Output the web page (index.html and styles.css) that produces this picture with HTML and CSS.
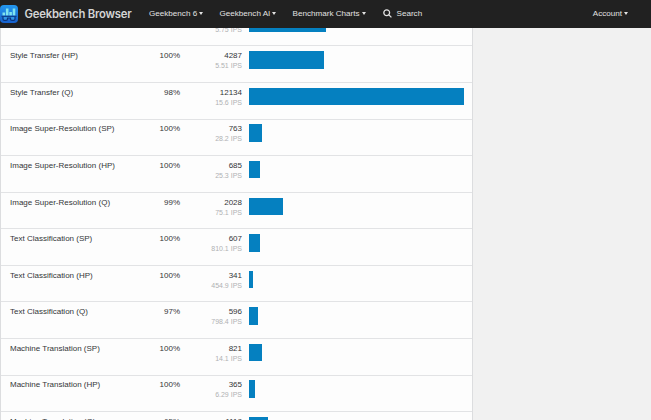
FILE: index.html
```html
<!DOCTYPE html>
<html lang="en">
<head>
<meta charset="utf-8">
<title>Geekbench Browser</title>
<link rel="stylesheet" href="styles.css">
</head>
<body>
<nav class="navbar">
  <a class="brand">
    <svg class="logo" viewBox="0 0 18 18">
      <defs><linearGradient id="g" x2="0" y2="1"><stop stop-color="#2398ee"/><stop offset="1" stop-color="#1760cc"/></linearGradient></defs>
      <rect width="18" height="18" rx="4" fill="url(#g)"/>
      <path d="M2.500 7.500h2.600v3H2.500zM5.900 3.500h2.600v7H5.900zM9.300 7h2.600v3.500H9.300zM12.700 3.500h2.600v7h-2.600z" fill="#7fe4ee"/>
      <path d="M1.500 11.300h15" stroke="#0b347e" stroke-width="1"/>
      <path d="M3 12v2q0 1.400 1.400 1.400h1.700q1.400 0 1.400-1.400v-1h3v1q0 1.400 1.400 1.400h1.700q1.400 0 1.400-1.400v-2" fill="#3296e4" stroke="#0b347e" stroke-width="1.200"/>
    </svg>
    <span class="brand-name">Geekbench Browser</span>
  </a>
  <a class="link gb">Geekbench 6<i class="caret"></i></a>
  <a class="link ai">Geekbench AI<i class="caret"></i></a>
  <a class="link charts">Benchmark Charts<i class="caret"></i></a>
  <a class="link search"><svg class="glass" viewBox="0 0 9 9"><circle cx="3.700" cy="3.700" r="2.900"/><path d="M5.900 5.900L8.400 8.400"/></svg>Search</a>
  <a class="link account">Account<i class="caret"></i></a>
</nav>
<main class="page">
  <div class="results">
    <div class="row"><div class="name"></div><div class="acc"></div><div class="score">&nbsp;<small>5.75 IPS</small></div><div class="bar" style="width:77px"></div></div>
    <div class="row"><div class="name">Style Transfer (HP)</div><div class="acc">100%</div><div class="score">4287<small>5.51 IPS</small></div><div class="bar" style="width:75px"></div></div>
    <div class="row"><div class="name">Style Transfer (Q)</div><div class="acc">98%</div><div class="score">12134<small>15.6 IPS</small></div><div class="bar" style="width:214.500px"></div></div>
    <div class="row"><div class="name">Image Super-Resolution (SP)</div><div class="acc">100%</div><div class="score">763<small>28.2 IPS</small></div><div class="bar" style="width:13px"></div></div>
    <div class="row"><div class="name">Image Super-Resolution (HP)</div><div class="acc">100%</div><div class="score">685<small>25.3 IPS</small></div><div class="bar" style="width:10.600px"></div></div>
    <div class="row"><div class="name">Image Super-Resolution (Q)</div><div class="acc">99%</div><div class="score">2028<small>75.1 IPS</small></div><div class="bar" style="width:34px"></div></div>
    <div class="row"><div class="name">Text Classification (SP)</div><div class="acc">100%</div><div class="score">607<small>810.1 IPS</small></div><div class="bar" style="width:10.600px"></div></div>
    <div class="row"><div class="name">Text Classification (HP)</div><div class="acc">100%</div><div class="score">341<small>454.9 IPS</small></div><div class="bar" style="width:4.400px"></div></div>
    <div class="row"><div class="name">Text Classification (Q)</div><div class="acc">97%</div><div class="score">596<small>798.4 IPS</small></div><div class="bar" style="width:8.600px"></div></div>
    <div class="row"><div class="name">Machine Translation (SP)</div><div class="acc">100%</div><div class="score">821<small>14.1 IPS</small></div><div class="bar" style="width:13px"></div></div>
    <div class="row"><div class="name">Machine Translation (HP)</div><div class="acc">100%</div><div class="score">365<small>6.29 IPS</small></div><div class="bar" style="width:6.400px"></div></div>
    <div class="row"><div class="name">Machine Translation (Q)</div><div class="acc">65%</div><div class="score">1118<small>19.3 IPS</small></div><div class="bar" style="width:19.300px"></div></div>
  </div>
</main>
</body>
</html>
```
FILE: styles.css
```css
* { box-sizing: border-box; }
body {
  margin: 0;
  height: 420px;
  display: flex;
  flex-direction: column;
  overflow: hidden;
  background: #f1f1f1;
  color: #343638;
  font: 8px/10px "Liberation Sans", Arial, sans-serif;
}
.navbar {
  flex: 0 0 28px;
  display: flex;
  align-items: center;
  padding: 0 23px 1px 0;
  background: #212121;
  color: #e2e2e2;
  white-space: nowrap;
}
.brand { display: flex; align-items: center; width: 149px; }
.logo { width: 18px; height: 18px; margin-right: 6.500px; }
.brand-name {
  font: 600 11.300px/16px Inter, sans-serif;
  letter-spacing: -0.200px;
  color: #d4d4d4;
}
.link { display: flex; align-items: center; font-size: 8.100px; }
.gb { width: 70.500px; }
.ai { width: 73px; }
.charts { width: 90px; }
.account { margin-left: auto; }
.caret {
  margin-left: 2px;
  border: solid transparent;
  border-width: 3px 2px 0;
  border-top-color: currentColor;
}
.glass {
  width: 9px;
  height: 9px;
  margin-right: 5px;
  fill: none;
  stroke: currentColor;
  stroke-width: 1.300;
}
.page { flex: 1; min-height: 0; overflow: hidden; }
.results {
  width: 473px;
  margin-top: -19.100px;
  background: #fdfdfd;
  border: solid #dcdddf;
  border-width: 0 1px;
}
.row {
  display: grid;
  grid-template-columns: 130px 40px 62px 1fr;
  height: 36.570px;
  padding: 4.800px 0 0 9px;
  border-top: 1px solid #e2e3e5;
}
.acc, .score { text-align: right; }
.score small { display: block; font-size: 7px; color: #b0b1b3; }
.bar { height: 17.500px; margin-left: 7px; background: #0580c0; }
```
